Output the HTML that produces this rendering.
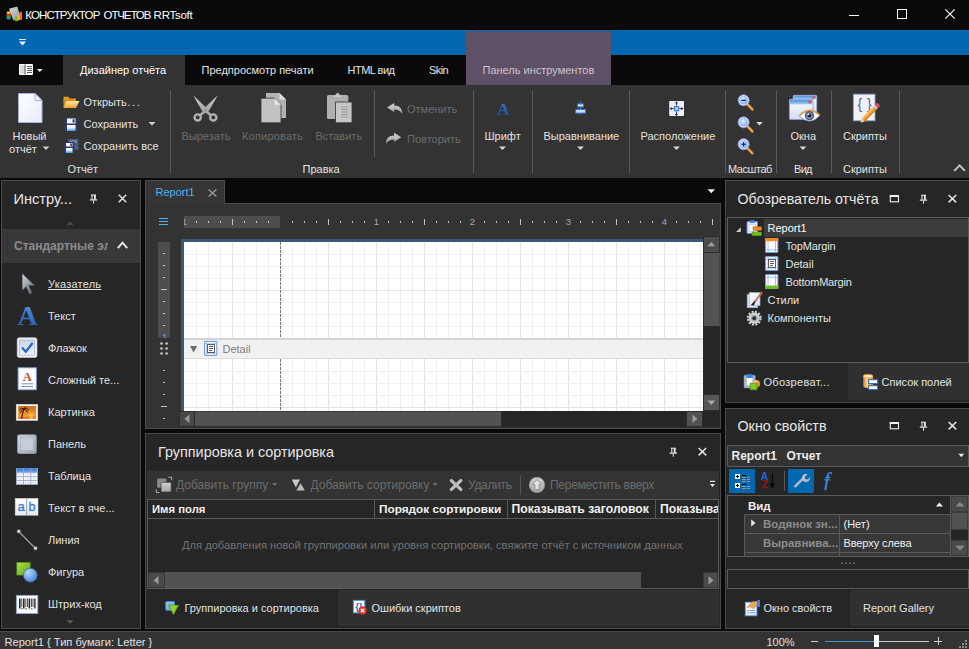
<!DOCTYPE html>
<html lang="ru"><head><meta charset="utf-8"><title>КОНСТРУКТОР ОТЧЕТОВ RRTsoft</title>
<style>
*{box-sizing:border-box}
html,body{margin:0;padding:0}
body{width:969px;height:649px;background:#0a0a0a;position:relative;overflow:hidden;font-family:"Liberation Sans",sans-serif;font-size:11px;color:#e2e2e2}
.a{position:absolute}
.t{position:absolute;white-space:nowrap;line-height:14px;font-size:11px}
.d{color:#6c6c6c}
.b{font-weight:bold}
.h{font-size:14.3px;line-height:18px;color:#e6e6e6}
.sep{position:absolute;width:1px;background:#595959}
.pn{position:absolute;background:#262626;border:1px solid #4b4b4b}
.gv{background-image:linear-gradient(to right,transparent 47px,#e4e4e4 47px),linear-gradient(to right,transparent 11px,#f0f0f0 11px);background-size:48px 48px,12px 12px}
.gh{background-image:linear-gradient(to bottom,transparent 47px,#e4e4e4 47px),linear-gradient(to bottom,transparent 11px,#f0f0f0 11px);background-size:48px 48px,12px 12px}
svg{position:absolute;overflow:visible}
</style></head><body>
<!--TITLEBAR-->
<div class="a" id="title" style="left:0;top:0;width:969px;height:30px;background:#0a0a0a">
<div class="t" style="left:0;top:8px;font-size:11.5px;color:#fff;width:200px;height:14px"><span class="a" style="left:25.2px;letter-spacing:-.82px">КОНСТРУКТОР </span><span class="a" style="left:103.6px;letter-spacing:-1.12px">ОТЧЕТОВ </span><span class="a" style="left:153.6px;letter-spacing:-.27px">RRTsoft</span></div>
</div>
<!--BLUEBAR-->
<div class="a" style="left:0;top:30px;width:969px;height:25px;background:#0067b0"></div>
<div class="a" style="left:466px;top:31px;width:145px;height:54px;background:#5e5067"></div>
<!--TABROW-->
<div class="a" style="left:63px;top:55px;width:122px;height:30px;background:#333"></div>
<div class="t" style="left:80px;top:63px;color:#fff">Дизайнер отчёта</div>
<div class="t" style="left:201.5px;top:63px">Предпросмотр печати</div>
<div class="t" style="left:347.5px;top:63px;letter-spacing:-.5px">HTML вид</div>
<div class="t" style="left:429px;top:63px;letter-spacing:-.6px">Skin</div>
<div class="t" style="left:482.5px;top:63px;color:#cbc4cd">Панель инструментов</div>
<!--RIBBON-->
<div class="a" id="ribbon" style="left:0;top:85px;width:969px;height:93px;background:#333"></div>
<div class="sep" style="left:170px;top:90px;height:83px"></div>
<div class="sep" style="left:374px;top:90px;height:67px"></div>
<div class="sep" style="left:473px;top:90px;height:83px"></div>
<div class="sep" style="left:532px;top:90px;height:83px"></div>
<div class="sep" style="left:629px;top:90px;height:83px"></div>
<div class="sep" style="left:725px;top:90px;height:83px"></div>
<div class="sep" style="left:776px;top:90px;height:83px"></div>
<div class="sep" style="left:831px;top:90px;height:83px"></div>
<div class="sep" style="left:899px;top:90px;height:83px"></div>
<div class="t" style="left:12.5px;top:129px">Новый</div>
<div class="t" style="left:9px;top:142px">отчёт</div>
<div class="t" style="left:83.5px;top:95px">Открыть<span style="letter-spacing:1.7px;margin-left:.6px">...</span></div>
<div class="t" style="left:83.5px;top:117px">Сохранить</div>
<div class="t" style="left:83.5px;top:139px">Сохранить все</div>
<div class="t" style="left:67.5px;top:162px">Отчёт</div>
<div class="t d" style="left:181.5px;top:129px">Вырезать</div>
<div class="t d" style="left:242px;top:129px;letter-spacing:.2px">Копировать</div>
<div class="t d" style="left:315.5px;top:129px">Вставить</div>
<div class="t" style="left:302.5px;top:162px">Правка</div>
<div class="t d" style="left:407px;top:102px">Отменить</div>
<div class="t d" style="left:407px;top:131.5px">Повторить</div>
<div class="t" style="left:484.5px;top:129px">Шрифт</div>
<div class="t" style="left:543.5px;top:129px">Выравнивание</div>
<div class="t" style="left:640.5px;top:129px">Расположение</div>
<div class="t" style="left:728px;top:162px;letter-spacing:-0.45px">Масштаб</div>
<div class="t" style="left:790.5px;top:129px">Окна</div>
<div class="t" style="left:794px;top:162px;letter-spacing:-0.7px">Вид</div>
<div class="t" style="left:843px;top:129px">Скрипты</div>
<div class="t" style="left:843px;top:162px">Скрипты</div>
<div class="pn" style="left:1px;top:180px;width:140px;height:449px"></div>
<div class="t h" style="left:13.5px;top:190px;font-size:14.6px">Инстру...</div>
<div class="a" style="left:2px;top:229px;width:138px;height:34px;background:#383838"></div>
<div class="a" style="left:14px;top:238px;width:94px;height:16px;overflow:hidden"><div class="t b" style="left:0;top:1px;font-size:12px;color:#8c8c8c">Стандартные элементы</div></div>
<div class="t" style="left:48px;top:276.5px;text-decoration:underline;letter-spacing:.22px">Указатель</div>
<div class="t" style="left:48px;top:308.5px">Текст</div>
<div class="t" style="left:48px;top:340.5px">Флажок</div>
<div class="t" style="left:48px;top:372.5px">Сложный те...</div>
<div class="t" style="left:48px;top:404.5px">Картинка</div>
<div class="t" style="left:48px;top:436.5px">Панель</div>
<div class="t" style="left:48px;top:468.5px">Таблица</div>
<div class="t" style="left:48px;top:500.5px">Текст в яче...</div>
<div class="t" style="left:48px;top:532.5px">Линия</div>
<div class="t" style="left:48px;top:564.5px">Фигура</div>
<div class="t" style="left:48px;top:596.5px">Штрих-код</div>
<div class="a" style="left:145px;top:203px;width:576px;height:226px;background:#333;border:1px solid #4b4b4b"></div>
<div class="a" style="left:145px;top:180px;width:80px;height:24px;background:#353535;border:1px solid #4b4b4b;border-bottom:none"></div>
<div class="t" style="left:155.5px;top:185px;color:#4eb0f5">Report1</div>
<!-- h ruler -->
<div class="a" style="left:184px;top:216px;width:96px;height:12px;background:#4d4d4d"></div>
<div class="a" id="hticks" style="left:184px;top:216px;width:530px;height:12px"></div>
<!-- v ruler -->
<div class="a" style="left:158px;top:242px;width:12px;height:96px;background:#4d4d4d"></div>
<div class="a" id="vticks" style="left:158px;top:242px;width:12px;height:185px"></div>
<!-- surface -->
<div class="a" style="left:181px;top:239px;width:522px;height:172px;background:#3f5575"></div>
<div class="a" style="left:184px;top:242px;width:519px;height:96px;background:#fff"></div>
<div class="a gv" style="left:185px;top:242px;width:518px;height:96px"></div><div class="a gh" style="left:184px;top:243px;width:519px;height:95px"></div>
<div class="a" style="left:184px;top:358px;width:519px;height:53px;background:#fff"></div>
<div class="a gv" style="left:185px;top:359px;width:518px;height:52px"></div><div class="a gh" style="left:184px;top:360px;width:519px;height:51px"></div>
<div class="a" style="left:280px;top:242px;width:1px;height:96px;background:repeating-linear-gradient(to bottom,#777 0 3px,#fff 3px 4px)"></div>
<div class="a" style="left:280px;top:359px;width:1px;height:52px;background:repeating-linear-gradient(to bottom,#777 0 3px,#fff 3px 4px)"></div>
<div class="a" style="left:184px;top:338px;width:519px;height:21px;background:#f1f1f1;border-top:2px solid #d4d4d4;border-bottom:1px solid #dcdcdc"></div>
<div class="t" style="left:222.5px;top:342px;color:#7e7e7e">Detail</div>
<!-- scrollbars -->
<div class="a" style="left:703px;top:237px;width:17px;height:190px;background:#262626"></div>
<div class="a" style="left:703px;top:236px;width:17px;height:17px;background:#4c4c4c;border:1px solid #2c2c2c"></div>
<div class="a" style="left:703px;top:252px;width:17px;height:75px;background:#525252;border:1px solid #2c2c2c;border-right-color:#444"></div>
<div class="a" style="left:703px;top:394px;width:17px;height:17px;background:#565656;border:1px solid #2c2c2c"></div>
<div class="a" style="left:179px;top:411px;width:524px;height:16px;background:#262626"></div>
<div class="a" style="left:179px;top:411px;width:16px;height:16px;background:#484848;border:1px solid #2c2c2c"></div>
<div class="a" style="left:194px;top:411px;width:308px;height:16px;background:#525252;border:1px solid #2c2c2c;border-top-color:#3a3a3a"></div>
<div class="a" style="left:686px;top:411px;width:17px;height:16px;background:#525252;border:1px solid #2c2c2c"></div>
<div class="pn" style="left:145px;top:433px;width:576px;height:196px"></div>
<div class="t h" style="left:158px;top:443px;font-size:14.4px">Группировка и сортировка</div>
<div class="a" style="left:147px;top:471px;width:572px;height:28px;background:#333"></div>
<div class="t d" style="left:176px;top:477.5px;font-size:12px">Добавить группу</div>
<div class="t d" style="left:310.5px;top:477.5px;font-size:12px">Добавить сортировку</div>
<div class="t d" style="left:468px;top:477.5px;font-size:12px;letter-spacing:-.3px">Удалить</div>
<div class="sep" style="left:520px;top:475px;height:20px;background:#555"></div>
<div class="t d" style="left:550px;top:477.5px;font-size:12px;letter-spacing:-.27px">Переместить вверх</div>
<div class="a" style="left:147px;top:499px;width:572px;height:90px;border:1px solid #5a5a5a;background:#262626"></div>
<div class="a" style="left:148px;top:518px;width:570px;height:1px;background:#5a5a5a"></div>
<div class="a" style="left:374px;top:500px;width:1px;height:18px;background:#5a5a5a"></div>
<div class="a" style="left:507px;top:500px;width:1px;height:18px;background:#5a5a5a"></div>
<div class="a" style="left:655px;top:500px;width:1px;height:18px;background:#5a5a5a"></div>
<div class="t b" style="left:152px;top:501.5px;font-size:11.3px;color:#f0f0f0">Имя поля</div>
<div class="t b" style="left:379px;top:501.5px;font-size:11.8px;color:#f0f0f0">Порядок сортировки</div>
<div class="t b" style="left:511.5px;top:501.5px;font-size:12.2px;color:#f0f0f0">Показывать заголовок</div>
<div class="a" style="left:660px;top:500px;width:58px;height:18px;overflow:hidden"><div class="t b" style="left:0;top:1.5px;font-size:12.2px;color:#f0f0f0">Показывать итог</div></div>
<div class="t" style="left:182px;top:537.7px;font-size:11.15px;color:#727272">Для добавления новой группировки или уровня сортировки, свяжите отчёт с источником данных</div>
<div class="a" style="left:148px;top:572px;width:570px;height:16px;background:#262626"></div>
<div class="a" style="left:148px;top:572px;width:17px;height:16px;background:#4a4a4a;border:1px solid #383838"></div>
<div class="a" style="left:165px;top:572px;width:476px;height:16px;background:#525252"></div>
<div class="a" style="left:703px;top:572px;width:15px;height:16px;background:#4a4a4a;border:1px solid #383838"></div>
<div class="a" style="left:338px;top:590px;width:381px;height:36px;background:#303030"></div>
<div class="t" style="left:184.5px;top:600.8px">Группировка и сортировка</div>
<div class="t" style="left:371.5px;top:600.8px">Ошибки скриптов</div>
<div class="pn" style="left:725px;top:180px;width:250px;height:223px"></div>
<div class="t h" style="left:737.5px;top:190px;font-size:14.2px">Обозреватель отчёта</div>
<div class="a" style="left:727px;top:217px;width:242px;height:146px;border:1px solid #5a5a5a;background:#262626"></div>
<div class="a" style="left:764px;top:219px;width:204px;height:18px;background:#3c3c3c"></div>
<div class="t" style="left:767.5px;top:221px;color:#fff">Report1</div>
<div class="t" style="left:785.5px;top:239px;letter-spacing:-.15px">TopMargin</div>
<div class="t" style="left:785.5px;top:257px">Detail</div>
<div class="t" style="left:785.5px;top:275px;letter-spacing:-.2px">BottomMargin</div>
<div class="t" style="left:767.5px;top:293px">Стили</div>
<div class="t" style="left:767.5px;top:311px">Компоненты</div>
<div class="a" style="left:848px;top:363px;width:121px;height:37px;background:#303030"></div>
<div class="t" style="left:763.5px;top:375px;letter-spacing:.3px">Обозреват...</div>
<div class="t" style="left:881.5px;top:375px">Список полей</div>
<div class="pn" style="left:725px;top:408px;width:250px;height:221px"></div>
<div class="t h" style="left:737.5px;top:417px;font-size:14.3px">Окно свойств</div>
<div class="a" style="left:727px;top:445px;width:242px;height:22px;border:1px solid #5a5a5a;background:#333"></div>
<div class="t b" style="left:731.5px;top:449px;font-size:12px;word-spacing:6.3px;color:#ececec">Report1  Отчет</div>
<div class="a" style="left:729px;top:469px;width:26px;height:24px;background:#0067b0"></div>
<div class="sep" style="left:784px;top:471px;height:20px;background:#555"></div>
<div class="a" style="left:788px;top:469px;width:26px;height:24px;background:#0067b0"></div>
<div class="a" style="left:727px;top:495px;width:242px;height:62px;border:1px solid #5a5a5a;background:#262626"></div>
<div class="t b" style="left:748px;top:498.5px;font-size:11.5px;color:#f0f0f0">Вид</div>
<div class="a" style="left:744px;top:514px;width:207px;height:42px;background:#383838"></div>
<div class="a" style="left:744px;top:514px;width:207px;height:1px;background:#5a5a5a"></div>
<div class="a" style="left:744px;top:533px;width:207px;height:1px;background:#5a5a5a"></div>
<div class="a" style="left:744px;top:552px;width:207px;height:1px;background:#5a5a5a"></div>
<div class="a" style="left:744px;top:514px;width:1px;height:42px;background:#5a5a5a"></div>
<div class="a" style="left:839px;top:514px;width:1px;height:42px;background:#5a5a5a"></div>
<div class="a" style="left:950px;top:496px;width:1px;height:60px;background:#5a5a5a"></div>
<div class="a" style="left:763px;top:516px;width:76px;height:16px;overflow:hidden"><div class="t b" style="left:0;top:1px;font-size:11.5px;color:#8c8c8c">Водянок зн...</div></div>
<div class="a" style="left:763px;top:535px;width:76px;height:16px;overflow:hidden"><div class="t b" style="left:0;top:1px;font-size:11.45px;color:#8c8c8c">Выравнива...</div></div>
<div class="t" style="left:843.5px;top:517px;color:#f0f0f0">(Нет)</div>
<div class="t" style="left:843.5px;top:536px;color:#f0f0f0;letter-spacing:-.1px">Вверху слева</div>
<div class="a" style="left:951px;top:496px;width:17px;height:60px;background:#262626"></div>
<div class="a" style="left:951px;top:496px;width:17px;height:16px;background:#4a4a4a;border:1px solid #3a3a3a"></div>
<div class="a" style="left:951px;top:512px;width:17px;height:18px;background:#525252;border:1px solid #3a3a3a"></div>
<div class="a" style="left:951px;top:540px;width:17px;height:16px;background:#4a4a4a;border:1px solid #3a3a3a"></div>
<div class="a" style="left:727px;top:569px;width:242px;height:20px;border:1px solid #5a5a5a;background:#262626"></div>
<div class="a" style="left:850px;top:590px;width:119px;height:36px;background:#303030"></div>
<div class="t" style="left:763.5px;top:600.5px">Окно свойств</div>
<div class="t" style="left:863px;top:600.5px">Report Gallery</div>
<div class="a" style="left:0;top:631px;width:969px;height:18px;background:#333;border-top:1px solid #4a4a4a"></div>
<div class="t" style="left:4.5px;top:634.5px;font-size:11.1px">Report1 { Тип бумаги: Letter }</div>
<div class="t" style="left:766.5px;top:634.5px">100%</div>
<div class="a" style="left:811px;top:641px;width:7px;height:1px;background:#d0d0d0"></div>
<div class="a" style="left:825px;top:641px;width:49px;height:1px;background:#3a9ae0"></div>
<div class="a" style="left:879px;top:641px;width:50px;height:1px;background:#c8c8c8"></div>
<div class="a" style="left:874px;top:635px;width:5px;height:12px;background:#fff"></div>
<div class="a" style="left:934px;top:641px;width:8px;height:1px;background:#d0d0d0"></div>
<div class="a" style="left:938px;top:637px;width:1px;height:8px;background:#d0d0d0"></div>
<!--IC1--><svg id="ic1" width="969" height="180" viewBox="0 0 969 180" style="left:0;top:0">
<defs>
<linearGradient id="gPage" x1="0" y1="0" x2="1" y2="1"><stop offset="0" stop-color="#ffffff"/><stop offset="1" stop-color="#e6ebfa"/></linearGradient>
<linearGradient id="gFold" x1="0" y1="0" x2="0" y2="1"><stop offset="0" stop-color="#ffe9a8"/><stop offset="1" stop-color="#f0a030"/></linearGradient>
<linearGradient id="gBlueLbl" x1="0" y1="0" x2="0" y2="1"><stop offset="0" stop-color="#ffffff"/><stop offset=".45" stop-color="#e8f2fc"/><stop offset="1" stop-color="#3d94e6"/></linearGradient>
<linearGradient id="gGray" x1="0" y1="0" x2="0" y2="1"><stop offset="0" stop-color="#d4d4d4"/><stop offset="1" stop-color="#9c9c9c"/></linearGradient>
<radialGradient id="gLens" cx=".4" cy=".35" r=".7"><stop offset="0" stop-color="#e4f2ff"/><stop offset="1" stop-color="#7fb2ee"/></radialGradient>
<linearGradient id="gWin" x1="0" y1="0" x2="0" y2="1"><stop offset="0" stop-color="#fbfcff"/><stop offset="1" stop-color="#d3dcf3"/></linearGradient>
<linearGradient id="gWinT" x1="0" y1="0" x2="0" y2="1"><stop offset="0" stop-color="#4d8fdc"/><stop offset="1" stop-color="#a6cdf3"/></linearGradient>
<linearGradient id="gA" x1="0" y1="0" x2="0" y2="1"><stop offset="0" stop-color="#3d7fd0"/><stop offset="1" stop-color="#1a4790"/></linearGradient>
</defs>
<!-- app icon -->
<rect x="6.7" y="17" width="4" height="2.6" rx="1" fill="#1f86e0"/><rect x="6.7" y="15.2" width="4" height="2.4" fill="#2fae3c"/><rect x="6.7" y="13.2" width="4" height="2.4" fill="#e8381e"/><rect x="6.7" y="11.4" width="4" height="2.4" rx="1" fill="#fbd22a"/>
<rect x="19.4" y="11.8" width="2.7" height="8" fill="#f0672a"/><rect x="17.2" y="14" width="2.4" height="6.2" fill="#f6b22a"/>
<linearGradient id="gPaper" x1="0" y1="0" x2="1" y2="1"><stop offset="0" stop-color="#d3d7da"/><stop offset="1" stop-color="#94999d"/></linearGradient>
<polygon points="9,8.8 17.3,6.4 20.3,16.8 13.4,20.6" fill="url(#gPaper)"/>
<rect x="14.8" y="16.6" width="3.2" height="4.6" rx=".8" fill="#58c41f"/><rect x="17.4" y="15.4" width="2.2" height="4.8" fill="#f3b62c"/>
<!-- window controls -->
<rect x="849" y="15" width="10" height="1" fill="#fff"/>
<rect x="897.5" y="9.5" width="9" height="9" fill="none" stroke="#fff" stroke-width="1"/>
<path d="M945.3,9.3 L954.7,18.7 M954.7,9.3 L945.3,18.7" stroke="#fff" stroke-width="1.1" fill="none"/>
<!-- QAT -->
<rect x="19" y="39" width="7" height="1" fill="#e6efff"/><polygon points="19,41.5 26,41.5 22.5,45.5" fill="#e6efff"/>
<!-- app button -->
<rect x="19" y="64" width="14" height="11" rx="1" fill="#fff"/><rect x="20" y="65" width="4" height="9" fill="#d9d9d9"/><rect x="24.5" y="64.5" width="1" height="10" fill="#3a3a3a"/>
<rect x="27" y="66" width="5" height="1" fill="#555"/><rect x="27" y="68" width="5" height="1" fill="#555"/><rect x="27" y="70" width="5" height="1" fill="#555"/><rect x="27" y="72" width="5" height="1" fill="#555"/>
<polygon points="37,69 42.5,69 39.75,72" fill="#fff"/>
<!-- new page -->
<path d="M18.5,93.5 H35 L42,100.5 V122.5 H18.5 Z" fill="url(#gPage)" stroke="#a6b0dc" stroke-width="1"/>
<path d="M35,93.5 V100.5 H42 Z" fill="#eef1fb" stroke="#a6b0dc" stroke-width="1" stroke-linejoin="round"/>
<polygon points="42.5,146.5 49.5,146.5 46,150" fill="#cfcfcf"/>
<!-- open folder -->
<path d="M63.5,96.8 h4.8 l1.4,1.6 h6.3 v3 h-12.5z" fill="#e59a28"/>
<path d="M63.5,99.5 h12.5 v8.5 h-12.5z" fill="#d98b1c"/>
<path d="M66.5,101 H79.5 L76,108 H63.5 Z" fill="url(#gFold)"/>
<!-- save -->
<rect x="64.5" y="117.5" width="13" height="13.5" rx="1" fill="#2b3a63"/>
<rect x="67" y="118.5" width="8.5" height="5" fill="#f3f5fb"/><rect x="72.7" y="119.3" width="1.8" height="3.2" fill="#1d2747"/>
<rect x="67" y="125" width="8.5" height="6" fill="url(#gBlueLbl)"/>
<polygon points="148.5,122 155.5,122 152,125.5" fill="#cfcfcf"/>
<!-- save all -->
<rect x="68" y="139" width="10.5" height="11" rx="1" fill="#4b5a82"/><rect x="70" y="140" width="7" height="3" fill="#6f7ea6"/>
<rect x="64" y="142" width="10.5" height="11" rx="1" fill="#2b3a63"/>
<rect x="66" y="143" width="6.5" height="3.5" fill="#f3f5fb"/><rect x="70.3" y="143.5" width="1.5" height="2.4" fill="#1d2747"/>
<rect x="66" y="148" width="6.5" height="5" fill="url(#gBlueLbl)"/>
<!-- scissors -->
<g fill="url(#gGray)"><polygon points="193.2,95.2 207.8,109.2 203.4,113.2"/><polygon points="217.8,95.2 203.2,109.2 207.6,113.2"/></g>
<path d="M205.5,111 L211,115.3 M205.5,111 L200,115.3" stroke="#ababab" stroke-width="2.6" fill="none"/>
<circle cx="197.7" cy="117.4" r="3.1" fill="none" stroke="#b2b2b2" stroke-width="2.3"/>
<circle cx="213.3" cy="117.4" r="3.1" fill="none" stroke="#b2b2b2" stroke-width="2.3"/>
<circle cx="205.5" cy="110.6" r=".8" fill="#777"/>
<!-- copy -->
<path d="M266,93 H279.5 L286,99.5 V118 H266 Z" fill="#b3b3b3"/><path d="M279.5,93 V99.5 H286 Z" fill="#dcdcdc"/>
<path d="M261,98.2 H274.5 L281,104.7 V122.8 H261 Z" fill="#c2c2c2" stroke="#333" stroke-width=".8"/><path d="M274.5,98.2 V104.7 H281 Z" fill="#e6e6e6"/>
<!-- paste -->
<rect x="327" y="95" width="21.3" height="24" rx="1.5" fill="#b0b0b0"/>
<path d="M333,96.5 q0,-1.5 2,-1.5 h1 q0.3,-2 1.7,-2 t1.7,2 h1 q2,0 2,1.5 v1 h-9.4z" fill="#c9c9c9" stroke="#9a9a9a" stroke-width=".5"/>
<rect x="335.5" y="102" width="16.5" height="20.8" fill="#c6c6c6" stroke="#333" stroke-width=".8"/>
<g fill="#9a9a9a"><rect x="341" y="106.5" width="7" height="1"/><rect x="341" y="109" width="7" height="1"/><rect x="341" y="111.5" width="7" height="1"/><rect x="341" y="114" width="7" height="1"/><rect x="341" y="116.5" width="7" height="1"/></g>
<!-- undo / redo -->
<path d="M387,107.5 L394.2,103 L394.2,105.6 C399.5,105.6 402.6,109 402.2,114 C400.3,110.6 397.8,109.6 394.2,109.6 L394.2,112 Z" fill="url(#gGray)"/>
<path d="M401.3,137.3 L394.1,132.8 L394.1,135.4 C388.8,135.4 385.7,138.8 386.1,143.8 C388,140.4 390.5,139.4 394.1,139.4 L394.1,141.8 Z" fill="url(#gGray)"/>
<!-- Font A -->
<text x="503.2" y="114.6" text-anchor="middle" font-family="Liberation Serif,serif" font-weight="bold" font-size="17.5" fill="url(#gA)">A</text>
<polygon points="499,146.5 506,146.5 502.5,150" fill="#d6d6d6"/>
<!-- align -->
<rect x="580" y="101.5" width="1" height="13" fill="#4f82d4"/>
<rect x="577.5" y="103.9" width="6" height="3" fill="#c2e2fc" stroke="#3f73cc" stroke-width="1"/>
<rect x="575.7" y="109.4" width="9.8" height="3.7" fill="#c2e2fc" stroke="#3f73cc" stroke-width="1"/>
<polygon points="577,146.5 584,146.5 580.5,150" fill="#d6d6d6"/>
<!-- layout -->
<rect x="669.2" y="100.9" width="14.8" height="15" rx=".8" fill="#eceffa"/>
<rect x="674.4" y="106.5" width="4.3" height="4.3" fill="#94c8f8" stroke="#3a78c8" stroke-width="1"/>
<g fill="#2a3350"><rect x="676" y="102" width="1" height="3.6"/><rect x="676" y="111.6" width="1" height="3.6"/><rect x="670.4" y="108.1" width="3.4" height="1"/><rect x="679.3" y="108.1" width="3.4" height="1"/>
<polygon points="676.5,101.2 674.8,103.3 678.2,103.3"/><polygon points="676.5,116 674.8,113.9 678.2,113.9"/><polygon points="669.6,108.6 671.7,106.9 671.7,110.3"/><polygon points="683.5,108.6 681.4,106.9 681.4,110.3"/></g>
<polygon points="673,146.5 680,146.5 676.5,150" fill="#d6d6d6"/>
<!-- zoom icons -->
<g id="mag"><path d="M747.8,104.6 L752.3,109.3" stroke="#b9691c" stroke-width="3" stroke-linecap="round"/><path d="M747.8,104.6 L752.3,109.3" stroke="#f6b058" stroke-width="1.6" stroke-linecap="round"/>
<circle cx="743.6" cy="100.3" r="5.6" fill="#f4f7ff" stroke="#6f7fd0" stroke-width=".9"/><circle cx="743.6" cy="100.3" r="4" fill="url(#gLens)" stroke="#86a5e2" stroke-width=".6"/></g>
<rect x="741.3" y="99.7" width="4.6" height="1.3" fill="#1a2668"/>
<use href="#mag" y="22"/>
<polygon points="756.2,122 762.8,122 759.5,125.5" fill="#d6d6d6"/>
<use href="#mag" y="43.9"/>
<rect x="741.3" y="143.6" width="4.6" height="1.3" fill="#1a2668"/><rect x="742.95" y="141.9" width="1.3" height="4.6" fill="#1a2668"/>
<!-- windows -->
<rect x="793.2" y="95.3" width="23.6" height="19" rx="1" fill="url(#gWin)" stroke="#8a9bd2" stroke-width=".8"/>
<rect x="793.7" y="95.8" width="22.6" height="3.6" fill="url(#gWinT)"/><rect x="812.4" y="96.5" width="2.2" height="2.2" fill="#e8473c"/>
<rect x="789.4" y="99.3" width="23.6" height="20.2" rx="1" fill="url(#gWin)" stroke="#8a9bd2" stroke-width=".8"/>
<rect x="789.9" y="99.8" width="22.6" height="4.6" fill="url(#gWinT)"/><rect x="808.6" y="100.9" width="2.4" height="2.4" fill="#e8473c"/>
<path d="M799.3,116 Q809.5,105.5 819.8,115.5 Q810,126.5 799.3,116 Z" fill="#fafbff" stroke="#7186c2" stroke-width=".8"/>
<path d="M799.3,115.8 Q809.5,105 819.8,115.3" fill="none" stroke="#e09a3c" stroke-width="1.5"/>
<circle cx="809.5" cy="115.6" r="4.7" fill="#4c5a7c"/><circle cx="809.5" cy="115.6" r="3.2" fill="#8f9cbc"/><circle cx="809.5" cy="115.6" r="2" fill="#1e2438"/><circle cx="808.4" cy="114.3" r=".9" fill="#e8eefc"/>
<polygon points="799.5,146.5 806.5,146.5 803,150" fill="#d6d6d6"/>
<!-- scripts -->
<rect x="853.4" y="94.2" width="21.6" height="26.6" fill="#eef1fb" stroke="#8d9ccf" stroke-width=".9"/>
<text x="859.8" y="109.3" text-anchor="middle" font-family="Liberation Sans,sans-serif" font-size="14" fill="#55648c">{</text><text x="869.4" y="109.3" text-anchor="middle" font-family="Liberation Sans,sans-serif" font-size="14" fill="#55648c">}</text>
<g transform="translate(860.2,123) rotate(-45.5)"><polygon points="0,0 4.3,-2.2 4.3,2.2" fill="#ecd2a6"/><polygon points="0,0 1.6,-.8 1.6,.8" fill="#2a3350"/>
<rect x="4.3" y="-2.2" width="17" height="4.4" fill="#f2a02e"/><rect x="4.3" y="-2.2" width="17" height="1.5" fill="#f9c56e"/><rect x="4.3" y=".9" width="17" height="1.3" fill="#d8801a"/>
<rect x="21.3" y="-2.2" width="1.8" height="4.4" fill="#d8dbe6"/><rect x="23.1" y="-2.2" width="3.4" height="4.4" rx="1" fill="#e4525a"/></g>
<path d="M954.3,170.8 L959.6,165.4 L964.9,170.8" stroke="#c6c6c6" stroke-width="1.9" fill="none"/>
</svg>
<!--/IC1-->
<!--IC2--><svg id="ic2" width="145" height="469" viewBox="0 180 145 469" style="left:0;top:180px">
<defs>
<linearGradient id="gPtr" x1="0" y1="0" x2="1" y2="1"><stop offset="0" stop-color="#d6dce2"/><stop offset="1" stop-color="#59616b"/></linearGradient>
<linearGradient id="gChk" x1="0" y1="0" x2="0" y2="1"><stop offset="0" stop-color="#c9d3e3"/><stop offset="1" stop-color="#f2f5fa"/></linearGradient>
<linearGradient id="gSun" x1="0" y1="0" x2="0" y2="1"><stop offset="0" stop-color="#cf701c"/><stop offset=".6" stop-color="#ef922c"/><stop offset="1" stop-color="#f6a838"/></linearGradient><radialGradient id="gGlow"><stop offset="0" stop-color="#fcd468" stop-opacity=".95"/><stop offset="1" stop-color="#f6a838" stop-opacity="0"/></radialGradient>
<linearGradient id="gPnl" x1="0" y1="0" x2="1" y2="1"><stop offset="0" stop-color="#d4dae2"/><stop offset="1" stop-color="#98a3b2"/></linearGradient>
<linearGradient id="gTblH" x1="0" y1="0" x2="0" y2="1"><stop offset="0" stop-color="#2f76d4"/><stop offset="1" stop-color="#6fabee"/></linearGradient><linearGradient id="gAb" x1="0" y1="0" x2="0" y2="1"><stop offset="0" stop-color="#ffffff"/><stop offset="1" stop-color="#e6eaf3"/></linearGradient>
<radialGradient id="gBall" cx=".35" cy=".3" r=".8"><stop offset="0" stop-color="#b7d6fa"/><stop offset="1" stop-color="#3f82d8"/></radialGradient>
<linearGradient id="gGrn" x1="0" y1="0" x2="1" y2="1"><stop offset="0" stop-color="#b6e04a"/><stop offset="1" stop-color="#5fa514"/></linearGradient>
<linearGradient id="gA2" x1="0" y1="0" x2="0" y2="1"><stop offset="0" stop-color="#5a9cea"/><stop offset="1" stop-color="#1d55a8"/></linearGradient>
</defs>
<!-- header pin & close -->
<g id="pin" fill="#f0f0f0"><rect x="91" y="194.5" width="5" height="1"/><rect x="91.5" y="195" width="1" height="4.5"/><rect x="94" y="195" width="1.8" height="4.5"/><rect x="89.8" y="199.3" width="7.4" height="1.2"/><rect x="93" y="200.5" width="1" height="3"/></g>
<path id="cls" d="M118.8,194.8 L126.2,202.2 M126.2,194.8 L118.8,202.2" stroke="#e4e4e4" stroke-width="1.5" fill="none"/>
<polygon points="66.5,225 73.5,225 70,221.3" fill="#4a4a4a"/>
<path d="M117.8,248.2 L122.5,242.7 L127.2,248.2" stroke="#ececec" stroke-width="1.9" fill="none"/>
<polygon points="66.5,620.2 73.5,620.2 70,623.8" fill="#5e5e5e"/>
<!-- pointer -->
<path d="M22.2,273.5 L22.2,290.3 L26.2,286.6 L29.6,294 L32,292.9 L28.7,285.6 L34.6,285.5 Z" fill="url(#gPtr)" stroke="#4a5058" stroke-width=".6"/>
<!-- A text -->
<text x="27.6" y="325" text-anchor="middle" font-family="Liberation Serif,serif" font-weight="bold" font-size="28" fill="url(#gA2)">A</text>
<!-- checkbox -->
<rect x="17.2" y="337.7" width="19.8" height="19.8" rx="2" fill="#f4f6fb" stroke="#b9c2d8" stroke-width=".7"/>
<rect x="19.5" y="340" width="15.2" height="15.2" fill="url(#gChk)" stroke="#a7b1c8" stroke-width=".7"/>
<path d="M22,347.5 L25.8,351.8 L32.6,343" stroke="#2a66c6" stroke-width="2.3" fill="none"/>
<!-- rich text -->
<rect x="18.1" y="367.8" width="18.2" height="22" fill="#fbfcff" stroke="#8ba3dc" stroke-width=".9"/>
<text x="27.2" y="381.3" text-anchor="middle" font-family="Liberation Serif,serif" font-weight="bold" font-size="12.5" fill="#c9521c">A</text>
<rect x="21.5" y="383.3" width="11.5" height="1" fill="#7f8fb4"/><rect x="21.5" y="386" width="11.5" height="1" fill="#7f8fb4"/>
<!-- picture -->
<rect x="16.2" y="404.3" width="21.6" height="16.2" fill="#fdfdfd" stroke="#d0d0d0" stroke-width=".5"/>
<rect x="18.1" y="406" width="18" height="12.8" fill="url(#gSun)"/>
<circle cx="31" cy="415.6" r="4.6" fill="url(#gGlow)"/>
<rect x="18.1" y="416.6" width="18" height="2.2" fill="#e6762c"/><rect x="29.6" y="416.6" width="3" height="2.2" fill="#fcc53a"/>
<g stroke="#3c1e0a" fill="none" stroke-width="1" stroke-linecap="round"><path d="M21.8,418.4 Q22.2,413 24,409" stroke-width="1.2"/><path d="M24,408.8 Q21.4,407 19.4,409.6"/><path d="M24,408.8 Q21.6,409.4 20.6,412.4"/><path d="M24,408.8 Q27,406.8 28.8,409.8"/><path d="M24,408.8 Q26.6,409.4 27.4,412.2"/><path d="M24,408.8 Q24.2,407.4 25.6,406.8"/></g>
<!-- panel -->
<rect x="17" y="434.2" width="19.8" height="19.8" rx="2.5" fill="#8c96a4"/>
<rect x="18" y="435.2" width="17.8" height="17.8" rx="2" fill="url(#gPnl)"/>
<rect x="20.5" y="437.7" width="12.8" height="12.8" fill="#c6cdd7" stroke="#aab3c0" stroke-width=".8"/>
<!-- table -->
<rect x="16.2" y="468.2" width="21.6" height="16.4" fill="#f6f8fb"/>
<rect x="16.2" y="468.2" width="21.6" height="4.4" fill="url(#gTblH)"/>
<g fill="#93a3c0"><rect x="16.2" y="472.4" width="21.6" height=".8"/><rect x="16.2" y="476.3" width="21.6" height=".8"/><rect x="16.2" y="480.2" width="21.6" height=".8"/><rect x="16.2" y="483.9" width="21.6" height=".8"/>
<rect x="16.2" y="468.2" width=".8" height="16.4"/><rect x="23.2" y="468.2" width=".8" height="16.4"/><rect x="30.4" y="468.2" width=".8" height="16.4"/><rect x="37" y="468.2" width=".8" height="16.4"/></g>
<g fill="#dfe4ec"><rect x="18" y="474.4" width="4.2" height="1"/><rect x="25" y="474.4" width="4.2" height="1"/><rect x="32.2" y="474.4" width="3.8" height="1"/><rect x="18" y="478.3" width="4.2" height="1"/><rect x="25" y="478.3" width="4.2" height="1"/><rect x="32.2" y="478.3" width="3.8" height="1"/><rect x="18" y="482" width="4.2" height="1"/><rect x="25" y="482" width="4.2" height="1"/><rect x="32.2" y="482" width="3.8" height="1"/></g>
<!-- ab -->
<rect x="15.2" y="498.4" width="22.8" height="16.8" fill="url(#gAb)" stroke="#cfd3dc" stroke-width=".6"/>
<rect x="26.2" y="498.4" width="1" height="16.8" fill="#9a9da6"/>
<text x="21.2" y="511.2" text-anchor="middle" font-family="Liberation Sans,sans-serif" font-size="12.6" fill="#3b7ad2" stroke="#3b7ad2" stroke-width=".35">a</text>
<text x="32.1" y="511.2" text-anchor="middle" font-family="Liberation Sans,sans-serif" font-size="12.6" fill="#3b7ad2" stroke="#3b7ad2" stroke-width=".35">b</text>
<!-- line -->
<path d="M18.6,531.3 L35.4,548.3" stroke="#a9afb8" stroke-width="1.2"/>
<rect x="17.2" y="529.9" width="3" height="3" fill="#eaeaea" stroke="#777" stroke-width=".6"/><rect x="34" y="546.8" width="3" height="3" fill="#eaeaea" stroke="#777" stroke-width=".6"/>
<!-- shape -->
<rect x="16.8" y="562.3" width="13.4" height="12.8" fill="url(#gGrn)" stroke="#4f8a12" stroke-width=".7"/>
<circle cx="30.3" cy="575.2" r="6.9" fill="url(#gBall)" stroke="#2f68b8" stroke-width=".7"/>
<!-- barcode -->
<rect x="16.4" y="595.4" width="21.4" height="18.2" fill="#fafbfe" stroke="#8ba3dc" stroke-width=".9"/>
<g fill="#2a2a2a"><rect x="19" y="598.5" width="1.6" height="10"/><rect x="21.4" y="598.5" width=".8" height="8.5"/><rect x="23" y="598.5" width="1.6" height="10"/><rect x="25.4" y="598.5" width=".8" height="8.5"/><rect x="27" y="598.5" width=".8" height="8.5"/><rect x="28.6" y="598.5" width="1.6" height="10"/><rect x="31" y="598.5" width=".8" height="8.5"/><rect x="32.6" y="598.5" width=".8" height="8.5"/><rect x="34.2" y="598.5" width="1.4" height="10"/>
<rect x="21.4" y="608.3" width="1.2" height="1"/><rect x="25.6" y="608.3" width="1.2" height="1"/><rect x="31.2" y="608.3" width="1.2" height="1"/></g>
</svg>
<!--/IC2-->
<!--IC3--><svg id="ic3" width="580" height="452" viewBox="145 180 580 452" style="left:145px;top:180px">
<defs>
<linearGradient id="gGray3" x1="0" y1="0" x2="0" y2="1"><stop offset="0" stop-color="#d2d2d2"/><stop offset="1" stop-color="#a2a2a2"/></linearGradient>
<clipPath id="cpH"><rect x="184" y="216" width="20" height="12"/></clipPath><clipPath id="cpV"><rect x="158" y="242" width="12" height="96"/></clipPath>
</defs>
<!-- tab close, dropdown -->
<path d="M208.6,189.4 L216.4,196.4 M216.4,189.4 L208.6,196.4" stroke="#9a9a9a" stroke-width="1.4" fill="none"/>
<polygon points="707.5,189.3 715,189.3 711.25,193.3" fill="#f2f2f2"/>
<!-- hamburger -->
<rect x="159" y="218" width="9" height="1" fill="#4fb2f4"/><rect x="159" y="221" width="9" height="1" fill="#4fb2f4"/><rect x="159" y="224" width="9" height="1" fill="#4fb2f4"/>
<rect x="196" y="221" width="1" height="2" fill="#c4c4c4"/>
<rect x="208" y="221" width="1" height="2" fill="#c4c4c4"/>
<rect x="220" y="221" width="1" height="2" fill="#c4c4c4"/>
<rect x="232" y="219" width="1" height="6" fill="#c4c4c4"/>
<rect x="244" y="221" width="1" height="2" fill="#c4c4c4"/>
<rect x="256" y="221" width="1" height="2" fill="#c4c4c4"/>
<rect x="268" y="221" width="1" height="2" fill="#c4c4c4"/>
<rect x="292" y="221" width="1" height="2" fill="#c4c4c4"/>
<rect x="304" y="221" width="1" height="2" fill="#c4c4c4"/>
<rect x="316" y="221" width="1" height="2" fill="#c4c4c4"/>
<rect x="328" y="219" width="1" height="6" fill="#c4c4c4"/>
<rect x="340" y="221" width="1" height="2" fill="#c4c4c4"/>
<rect x="352" y="221" width="1" height="2" fill="#c4c4c4"/>
<rect x="364" y="221" width="1" height="2" fill="#c4c4c4"/>
<rect x="388" y="221" width="1" height="2" fill="#c4c4c4"/>
<rect x="400" y="221" width="1" height="2" fill="#c4c4c4"/>
<rect x="412" y="221" width="1" height="2" fill="#c4c4c4"/>
<rect x="424" y="219" width="1" height="6" fill="#c4c4c4"/>
<rect x="436" y="221" width="1" height="2" fill="#c4c4c4"/>
<rect x="448" y="221" width="1" height="2" fill="#c4c4c4"/>
<rect x="460" y="221" width="1" height="2" fill="#c4c4c4"/>
<rect x="484" y="221" width="1" height="2" fill="#c4c4c4"/>
<rect x="496" y="221" width="1" height="2" fill="#c4c4c4"/>
<rect x="508" y="221" width="1" height="2" fill="#c4c4c4"/>
<rect x="520" y="219" width="1" height="6" fill="#c4c4c4"/>
<rect x="532" y="221" width="1" height="2" fill="#c4c4c4"/>
<rect x="544" y="221" width="1" height="2" fill="#c4c4c4"/>
<rect x="556" y="221" width="1" height="2" fill="#c4c4c4"/>
<rect x="580" y="221" width="1" height="2" fill="#c4c4c4"/>
<rect x="592" y="221" width="1" height="2" fill="#c4c4c4"/>
<rect x="604" y="221" width="1" height="2" fill="#c4c4c4"/>
<rect x="616" y="219" width="1" height="6" fill="#c4c4c4"/>
<rect x="628" y="221" width="1" height="2" fill="#c4c4c4"/>
<rect x="640" y="221" width="1" height="2" fill="#c4c4c4"/>
<rect x="652" y="221" width="1" height="2" fill="#c4c4c4"/>
<rect x="676" y="221" width="1" height="2" fill="#c4c4c4"/>
<rect x="688" y="221" width="1" height="2" fill="#c4c4c4"/>
<rect x="700" y="221" width="1" height="2" fill="#c4c4c4"/>
<rect x="712" y="219" width="1" height="6" fill="#c4c4c4"/>
<g clip-path="url(#cpH)"><text x="181.7" y="225.2" font-family="Liberation Sans,sans-serif" font-size="9.5" fill="#a3a7b4">1</text></g>
<text x="376.5" y="225.2" text-anchor="middle" font-family="Liberation Sans,sans-serif" font-size="9.5" fill="#a3a7b4">1</text>
<text x="472.5" y="225.2" text-anchor="middle" font-family="Liberation Sans,sans-serif" font-size="9.5" fill="#a3a7b4">2</text>
<text x="568.5" y="225.2" text-anchor="middle" font-family="Liberation Sans,sans-serif" font-size="9.5" fill="#a3a7b4">3</text>
<text x="664.5" y="225.2" text-anchor="middle" font-family="Liberation Sans,sans-serif" font-size="9.5" fill="#a3a7b4">4</text>
<rect x="163" y="253" width="2" height="1" fill="#c4c4c4"/>
<rect x="163" y="265" width="2" height="1" fill="#c4c4c4"/>
<rect x="163" y="277" width="2" height="1" fill="#c4c4c4"/>
<rect x="161" y="289" width="6" height="1" fill="#c4c4c4"/>
<rect x="163" y="301" width="2" height="1" fill="#c4c4c4"/>
<rect x="163" y="313" width="2" height="1" fill="#c4c4c4"/>
<rect x="163" y="325" width="2" height="1" fill="#c4c4c4"/>
<rect x="163" y="370" width="2" height="1" fill="#c4c4c4"/>
<rect x="163" y="382" width="2" height="1" fill="#c4c4c4"/>
<rect x="163" y="394" width="2" height="1" fill="#c4c4c4"/>
<rect x="161" y="406" width="6" height="1" fill="#c4c4c4"/>
<rect x="163" y="418" width="2" height="1" fill="#c4c4c4"/>
<g clip-path="url(#cpV)"><text x="162" y="340.3" font-family="Liberation Sans,sans-serif" font-size="9.5" fill="#6f9fe0">1</text></g>
<!-- band handle dots -->
<g fill="#c6c6c6"><circle cx="161.5" cy="343.5" r="1.3"/><circle cx="166.6" cy="343.5" r="1.3"/><circle cx="161.5" cy="348.5" r="1.3"/><circle cx="166.6" cy="348.5" r="1.3"/><circle cx="161.5" cy="353.5" r="1.3"/><circle cx="166.6" cy="353.5" r="1.3"/></g>
<!-- band triangle + icon -->
<polygon points="190,346 197.2,346 193.6,352.4" fill="#6c6c6c"/>
<rect x="204.6" y="341.4" width="12.2" height="14" rx=".3" fill="#fdfdff" stroke="#5f92e2" stroke-width="1"/>
<rect x="206.4" y="341.4" width=".7" height="14" fill="#9dbcec"/><rect x="214.3" y="341.4" width=".7" height="14" fill="#9dbcec"/><rect x="204.6" y="343.2" width="12.2" height=".7" fill="#9dbcec"/><rect x="204.6" y="353" width="12.2" height=".7" fill="#9dbcec"/>
<rect x="207.5" y="344.5" width="7" height="8" fill="#fff" stroke="#5a5a5a" stroke-width="1"/>
<rect x="209" y="346" width="4" height="1" fill="#5a5a5a"/><rect x="209" y="348" width="4" height="1" fill="#5a5a5a"/><rect x="209" y="350" width="3" height="1" fill="#5a5a5a"/>
<!-- scroll arrows (designer) -->
<polygon points="707.4,246.2 715.2,246.2 711.3,241.9" fill="#a2a2a2"/>
<polygon points="707.4,400.6 715.2,400.6 711.3,404.9" fill="#a8a8a8"/>
<polygon points="189.5,414.5 189.5,423 184.5,418.75" fill="#9a9a9a"/>
<polygon points="692.5,414.5 692.5,423 697.5,418.75" fill="#9a9a9a"/>
<!-- group panel header pin/close -->
<g fill="#f0f0f0"><rect x="670.8" y="447.7" width="5" height="1"/><rect x="671.3" y="448.2" width="1" height="4.5"/><rect x="673.8" y="448.2" width="1.8" height="4.5"/><rect x="669.6" y="452.5" width="7.4" height="1.2"/><rect x="672.8" y="453.7" width="1" height="3"/></g>
<path d="M698.6,448 L706.2,455.4 M706.2,448 L698.6,455.4" stroke="#e4e4e4" stroke-width="1.5" fill="none"/>
<!-- add group icon -->
<rect x="157.2" y="478.5" width="9.2" height="9.2" rx="1.2" fill="#8b8b8b"/>
<rect x="161" y="482.3" width="10.2" height="9.8" rx="1.2" fill="url(#gGray3)" stroke="#333" stroke-width=".7"/>
<path d="M168.5,477.3 H171.7 V480.3" stroke="#bdbdbd" stroke-width=".9" fill="none"/><path d="M156.3,489.3 V492.5 H159.5" stroke="#bdbdbd" stroke-width=".9" fill="none"/>
<polygon points="272,483.2 277,483.2 274.5,485.8" fill="#7a7a7a"/>
<!-- add sort icon -->
<polygon points="291.8,479.6 300,479.6 295.9,487.6" fill="#c9c9c9"/>
<polygon points="296,490.8 305.2,490.8 300.6,482.8" fill="#bdbdbd" stroke="#333" stroke-width=".5"/>
<polygon points="432.6,483.2 437.6,483.2 435.1,485.8" fill="#7a7a7a"/>
<!-- delete X -->
<path d="M451.4,480.6 L460.8,489.4 M460.8,480.6 L451.4,489.4" stroke="#bfbfbf" stroke-width="3.3" stroke-linecap="round" fill="none"/>
<!-- move up -->
<circle cx="537" cy="485" r="7.8" fill="url(#gGray3)" stroke="#8a8a8a" stroke-width=".6"/>
<path d="M537,479.6 L541.6,484.6 L539,484.6 L539,489.6 L535,489.6 L535,484.6 L532.4,484.6 Z" fill="#e4e4e4" stroke="#8e8e8e" stroke-width=".8" stroke-linejoin="round"/>
<!-- toolbar customize -->
<rect x="710" y="480.8" width="5" height="1.2" fill="#e4e4e4"/><polygon points="710,484 715,484 712.5,487" fill="#e4e4e4"/>
<!-- grid scroll arrows -->
<polygon points="158.5,576 158.5,584.5 153.5,580.25" fill="#9a9a9a"/>
<polygon points="708.5,576 708.5,584.5 713.5,580.25" fill="#9a9a9a"/>
<!-- tab icons -->
<rect x="165.2" y="601" width="9.8" height="9.8" rx="1.6" fill="#4b88dc"/><rect x="166.4" y="602.2" width="7.4" height="7.4" rx="1" fill="#a9caf4"/><rect x="167.6" y="603.4" width="6.2" height="6.2" fill="#6ea4ea"/>
<polygon points="168,605 179,605 173.5,615" fill="#6fb81c"/><polygon points="169.8,606 177.2,606 173.5,612.8" fill="#8fd42c"/>
<rect x="353.4" y="600.4" width="11.4" height="12.4" fill="#fbfcff" stroke="#5b92e2" stroke-width="1"/>
<text x="359" y="610" text-anchor="middle" font-family="Liberation Sans,sans-serif" font-size="9.5" font-weight="bold" fill="#2b69c2">{}</text>
<circle cx="362.6" cy="610.5" r="4.2" fill="#d8321e"/><path d="M360.8,608.7 L364.4,612.3 M364.4,608.7 L360.8,612.3" stroke="#fff" stroke-width="1.3"/>
</svg>
<!--/IC3-->
<!--IC4--><svg id="ic4" width="244" height="469" viewBox="725 180 244 469" style="left:725px;top:180px">
<defs>
<linearGradient id="gCyl" x1="0" y1="0" x2="1" y2="0"><stop offset="0" stop-color="#de7a10"/><stop offset=".35" stop-color="#fbd48a"/><stop offset="1" stop-color="#e0820f"/></linearGradient>
<radialGradient id="gOr" cx=".35" cy=".3" r=".8"><stop offset="0" stop-color="#fbd3a0"/><stop offset="1" stop-color="#d8660c"/></radialGradient>
<linearGradient id="gPg4" x1="0" y1="0" x2="1" y2="1"><stop offset="0" stop-color="#ffffff"/><stop offset="1" stop-color="#cfe2f8"/></linearGradient>
</defs>
<!-- header icons panel1 -->
<g id="hdr">
<rect x="890.3" y="195.6" width="8.2" height="6.2" fill="none" stroke="#f0f0f0" stroke-width="1.1"/><rect x="889.8" y="195" width="9.2" height="2" fill="#f0f0f0"/>
<g fill="#f0f0f0"><rect x="921" y="194.7" width="5" height="1"/><rect x="921.5" y="195.2" width="1" height="4.5"/><rect x="924" y="195.2" width="1.8" height="4.5"/><rect x="919.8" y="199.5" width="7.4" height="1.2"/><rect x="923" y="200.7" width="1" height="3"/></g>
<path d="M948.6,195 L956.2,202.4 M956.2,195 L948.6,202.4" stroke="#e4e4e4" stroke-width="1.5" fill="none"/>
</g>
<use href="#hdr" y="227"/>
<!-- tree -->
<polygon points="740.8,227.2 740.8,232 736,232" fill="#c8c8c8"/>
<rect x="747" y="221.5" width="10.5" height="12" rx="1" fill="#dfe8f8" stroke="#5f8cd8" stroke-width=".9"/><rect x="749.5" y="220.3" width="5.5" height="2.6" rx=".8" fill="#4a84dc"/><rect x="749" y="224.5" width="6.5" height="7" fill="#fff" stroke="#9fb6e0" stroke-width=".5"/>
<rect x="753" y="226.8" width="8.6" height="3.6" fill="#f08a24" stroke="#b85c0c" stroke-width=".5"/><rect x="752" y="232" width="9.6" height="3.8" fill="#6cc024" stroke="#3f8a10" stroke-width=".5"/>
<!-- topmargin -->
<g id="bandic"><rect x="765.5" y="238.5" width="12.4" height="14" rx=".8" fill="#f8faff" stroke="#6c9ae2" stroke-width="1"/>
<rect x="767.6" y="238.5" width=".8" height="14" fill="#8fb2ea"/><rect x="775" y="238.5" width=".8" height="14" fill="#8fb2ea"/></g>
<rect x="765" y="238" width="13.4" height="3.2" fill="#f08a24"/><rect x="765.5" y="249.5" width="12.4" height=".8" fill="#8fb2ea"/>
<!-- detail -->
<use href="#bandic" y="18"/><rect x="765.5" y="258.6" width="12.4" height=".8" fill="#8fb2ea"/><rect x="765.5" y="267.6" width="12.4" height=".8" fill="#8fb2ea"/>
<rect x="768.5" y="259.5" width="7" height="8" fill="#fff" stroke="#5a5a5a" stroke-width="1"/><rect x="770" y="261" width="4" height="1" fill="#5a5a5a"/><rect x="770" y="263" width="4" height="1" fill="#5a5a5a"/><rect x="770" y="265" width="3" height="1" fill="#5a5a5a"/>
<!-- bottommargin -->
<use href="#bandic" y="36"/><rect x="765.5" y="276.8" width="12.4" height=".8" fill="#8fb2ea"/><rect x="765" y="285.6" width="13.4" height="3.2" fill="#6cc024"/>
<!-- styles -->
<rect x="747.2" y="294.5" width="10.5" height="13.2" fill="#e9eef8" stroke="#9daccc" stroke-width=".7"/><rect x="749.2" y="292.5" width="10.8" height="13.2" fill="url(#gPg4)" stroke="#9daccc" stroke-width=".7"/>
<path d="M761.8,292.6 L754.5,302" stroke="#c8703c" stroke-width="1.8" stroke-linecap="round"/><path d="M755,301 L751.6,304.8 L753.6,305.2 Z" fill="#2a2020" stroke="#2a2020" stroke-width="1"/>
<!-- gear -->
<g transform="translate(754.2,318.2)"><circle r="5.6" fill="#d3d7db"/><circle r="6.5" fill="none" stroke="#d3d7db" stroke-width="1.8" stroke-dasharray="2.05 1.353"/><circle r="3.5" fill="#a4aab2"/><circle r="1.9" fill="#2c2c2c"/></g>
<!-- tab icons -->
<rect x="744" y="375.2" width="11.2" height="12.8" rx="1" fill="#aab5c8" stroke="#8592aa" stroke-width=".5"/><rect x="746.8" y="378" width="5.6" height="7.4" fill="#fbfbfd"/><rect x="746.4" y="374.3" width="6.4" height="3.6" rx="1" fill="#3b82da"/>
<circle cx="756.3" cy="383.8" r="3.9" fill="url(#gOr)"/>
<rect x="750.2" y="383.2" width="6.8" height="6.6" fill="#86c822" stroke="#4f9410" stroke-width=".8"/>
<path d="M863.2,376.2 V386 A4.9,1.9 0 0 0 873,386 V376.2 Z" fill="url(#gCyl)"/><ellipse cx="868.1" cy="376.2" rx="4.9" ry="1.9" fill="#fde3ae" stroke="#e0820f" stroke-width=".5"/>
<rect x="868.6" y="379.7" width="9" height="3.8" fill="#fff" stroke="#3a70b8" stroke-width="1.1"/><rect x="868.6" y="385.7" width="9" height="3.8" fill="#fff" stroke="#3a70b8" stroke-width="1.1"/>
<!-- combo arrow -->
<polygon points="958.3,453.8 964.2,453.8 961.25,457.2" fill="#e8e8e8"/>
<!-- prop toolbar -->
<rect x="735" y="474" width="5" height="5" fill="#fff"/><rect x="736" y="476" width="3" height="1" fill="#000"/><rect x="737" y="475" width="1" height="3" fill="#000"/>
<rect x="735" y="483" width="5" height="5" fill="#fff"/><rect x="736" y="485" width="3" height="1" fill="#000"/><rect x="737" y="484" width="1" height="3" fill="#000"/>
<rect x="742" y="475" width="4" height="1" fill="#000"/><rect x="742" y="484" width="4" height="1" fill="#000"/>
<g fill="#a8926e"><rect x="742" y="477" width="4" height="1"/><rect x="747" y="477" width="3" height="1"/><rect x="742" y="479" width="4" height="1"/><rect x="747" y="479" width="3" height="1"/><rect x="742" y="481" width="4" height="1"/><rect x="747" y="481" width="3" height="1"/><rect x="742" y="486" width="4" height="1"/><rect x="747" y="486" width="3" height="1"/><rect x="742" y="488" width="4" height="1"/><rect x="747" y="488" width="3" height="1"/></g>
<text x="764.5" y="479.8" text-anchor="middle" font-family="Liberation Sans,sans-serif" font-weight="bold" font-size="10.2" fill="#2264e6">A</text>
<text x="764.5" y="487.9" text-anchor="middle" font-family="Liberation Sans,sans-serif" font-weight="bold" font-size="10.2" fill="#981212">Z</text>
<rect x="771.9" y="473" width="1" height="12" fill="#000"/><polygon points="769.8,483.4 775,483.4 772.4,488.4" fill="#000"/>
<path d="M795.2,486.4 L803.2,478.4" stroke="#b9bec6" stroke-width="2.3" stroke-linecap="round"/>
<path d="M807.6,474.2 L804.6,477.2 L806,479.4 L808.8,479 L809.8,476.6 A4.1,4.1 0 1 1 807.6,474.2 Z" fill="#b9bec6"/>
<text x="827" y="486" text-anchor="middle" font-family="Liberation Serif,serif" font-style="italic" font-size="18" fill="#3b8be2" stroke="#3b8be2" stroke-width=".45">f</text><rect x="823.6" y="479.3" width="6.6" height="1.1" fill="#3b8be2"/>
<!-- grid: category arrow, expander, scroll arrows -->
<polygon points="935.8,506.4 943,506.4 939.4,502.6" fill="#f0f0f0"/>
<polygon points="751.2,519.4 751.2,526.6 755.6,523" fill="#e8e8e8"/>
<polygon points="955.5,506.6 964.5,506.6 960,502" fill="#8a8a8a"/>
<polygon points="955.5,545.8 964.5,545.8 960,550.4" fill="#8a8a8a"/>
<g fill="#6c6c6c"><rect x="841" y="562.5" width="2" height="1.4"/><rect x="845" y="562.5" width="2" height="1.4"/><rect x="849" y="562.5" width="2" height="1.4"/><rect x="853" y="562.5" width="2" height="1.4"/></g>
<!-- properties tab icon -->
<rect x="745.3" y="602.2" width="11.6" height="13.6" fill="url(#gPg4)" stroke="#5a98e8" stroke-width=".9"/>
<g fill="#8a9ab4"><rect x="747.2" y="610" width="2" height="1"/><rect x="750.2" y="610" width="4.8" height="1"/><rect x="747.2" y="612.2" width="2" height="1"/><rect x="750.2" y="612.2" width="4.8" height="1"/></g>
<path d="M747.2,607.4 L752.2,601.8 L757.4,601.2 L757.8,604.6 L753.6,608.6 L750.6,606.8 Z" fill="#e9a95a" stroke="#b8742a" stroke-width=".5"/>
<rect x="757.4" y="600" width="2.6" height="7" fill="#3b82da"/>
<!-- size grip -->
<g fill="#8a8a8a"><rect x="965" y="646" width="2" height="2"/><rect x="962" y="646" width="2" height="2"/><rect x="965" y="643" width="2" height="2"/><rect x="959" y="646" width="2" height="2"/><rect x="962" y="643" width="2" height="2"/><rect x="965" y="640" width="2" height="2"/></g>
</svg>
<!--/IC4-->
</body></html>
